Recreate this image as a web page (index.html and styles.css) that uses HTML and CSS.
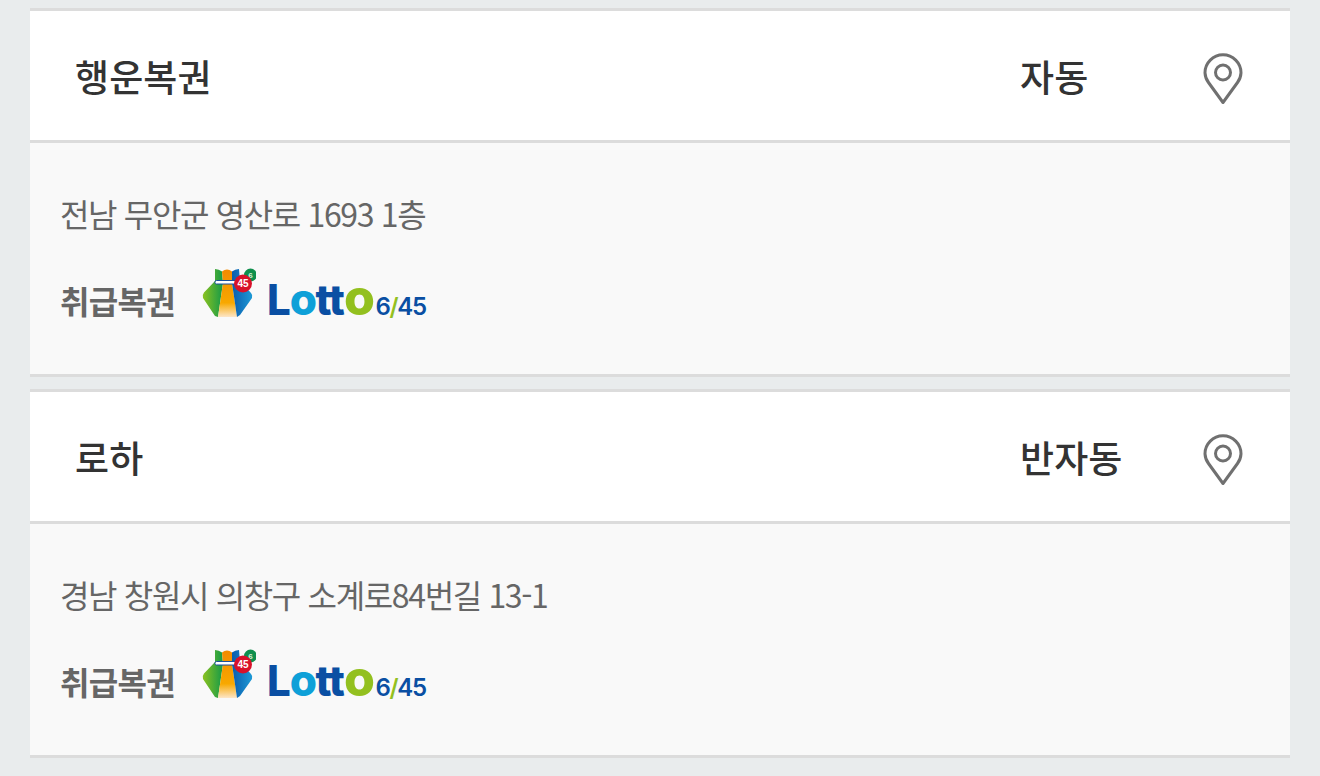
FILE: index.html
```html
<!DOCTYPE html>
<html lang="ko">

<head>
    <meta charset="UTF-8">
    <meta name="viewport" content="width=device-width, initial-scale=1.0">
    <title>판매점</title>
    <link rel="stylesheet" href="styles.css">
</head>

<body>

    <svg class="defs" width="0" height="0">
        <defs>
            <linearGradient id="fade-green" x1="0" y1="0" x2="1" y2="0">
                <stop offset="0" stop-color="#8cc220"/>
                <stop offset="1" stop-color="#159a48"/>
            </linearGradient>
            <linearGradient id="fade-orange" x1="0" y1="0" x2="0" y2="1">
                <stop offset="0" stop-color="#f28a00"/>
                <stop offset="0.7" stop-color="#f8a800"/>
                <stop offset="1" stop-color="#fde6c8"/>
            </linearGradient>
            <linearGradient id="fade-blue" x1="0" y1="0" x2="1" y2="0">
                <stop offset="0" stop-color="#0a5cad"/>
                <stop offset="1" stop-color="#1e9ad6"/>
            </linearGradient>
            <symbol id="bag" viewBox="0 0 54 50">
                <path d="M13 1 Q17 1 20 3.500 L21 15 L16 49 L13 48 L1 30 Q0 27 2 24.500 L13 13 Z" fill="url(#fade-green)"/>
                <path d="M20 3.500 Q25 -0.500 30 3.500 L30 15 L35 49 L16 49 L21 15 Z" fill="url(#fade-orange)"/>
                <path d="M30 3.500 Q33 1 37 1 L38 13 L49 25 Q51 27 50 30 L38 47 L35 49 L30 15 Z" fill="url(#fade-blue)"/>
                <rect x="13" y="12.500" width="23" height="3.500" rx="1.500" fill="#fff" stroke="#1b4f9c" stroke-width="1"/>
                <circle cx="48.500" cy="7" r="6.500" fill="#0f8f4d"/>
                <text x="48.500" y="10" class="bag-small">6</text>
                <circle cx="41" cy="15.500" r="9" fill="#d8112a"/>
                <text x="41" y="19" class="bag-num">45</text>
            </symbol>
            <symbol id="pin" viewBox="0 0 40 52">
                <path d="M20 49.500 L5.500 29.500 A17.800 17.800 0 0 1 2 19.800 A18 18 0 0 1 38 19.800 A17.800 17.800 0 0 1 34.500 29.500 Z" fill="none" stroke="currentColor" stroke-width="3" stroke-linejoin="round"/>
                <circle cx="20" cy="19.500" r="7.500" fill="none" stroke="currentColor" stroke-width="3"/>
            </symbol>
        </defs>
    </svg>

    <div class="container">
        <div class="card">
            <div class="card-head">
                <span class="shop-name">행운복권</span>
                <span class="shop-type">자동</span>
                <svg class="pin"><use href="#pin"/></svg>
            </div>
            <div class="card-body">
                <p class="address">전남 무안군 영산로 1693 1층</p>
                <div class="goods">
                    <b>취급복권</b>
                    <svg class="bag"><use href="#bag"/></svg>
                    <span class="lotto"><i class="c1">L</i><i class="c2 o1">o</i><i class="c1">tt</i><i class="c3 o2">o</i><small>6<em>/</em>45</small></span>
                </div>
            </div>
        </div>

        <div class="card">
            <div class="card-head">
                <span class="shop-name">로하</span>
                <span class="shop-type">반자동</span>
                <svg class="pin"><use href="#pin"/></svg>
            </div>
            <div class="card-body">
                <p class="address">경남 창원시 의창구 소계로84번길 13-1</p>
                <div class="goods">
                    <b>취급복권</b>
                    <svg class="bag"><use href="#bag"/></svg>
                    <span class="lotto"><i class="c1">L</i><i class="c2 o1">o</i><i class="c1">tt</i><i class="c3 o2">o</i><small>6<em>/</em>45</small></span>
                </div>
            </div>
        </div>
    </div>

</body>

</html>
```

FILE: styles.css
```css
body {
    margin: 0;
    background: #e9eced;
    font-family: "Noto Sans CJK KR", "Noto Sans", sans-serif;
    overflow: hidden;
}

.defs {
    position: absolute;
}

.container {
    padding: 8px 30px 0;
}

.card {
    margin-bottom: 12px;
    border-top: 3px solid #dcdcdc;
    border-bottom: 3px solid #dcdcdc;
    background: #f9f9f9;
}

.card-head {
    display: flex;
    align-items: center;
    height: 129px;
    padding: 0 47px 0 45px;
    border-bottom: 3px solid #dcdcdc;
    background: #fff;
}

.shop-name {
    flex: 1;
    font-size: 37px;
    font-weight: 500;
    letter-spacing: 0.1px;
    color: #333;
}

.shop-type {
    width: 183px;
    font-size: 37px;
    font-weight: 500;
    letter-spacing: 0.1px;
    color: #333;
}

.pin {
    width: 40px;
    height: 52px;
    margin-top: 6px;
    color: #707070;
}

.card-body {
    height: 231px;
    padding: 0 30px;
}

.address {
    margin: 0;
    padding-top: 46px;
    font-size: 32px;
    line-height: 48px;
    letter-spacing: -1.35px;
    color: #666;
}

.goods {
    display: flex;
    align-items: flex-start;
    margin-top: 31px;
    height: 50px;
}

.goods b {
    margin-top: 7px;
    font-size: 32px;
    font-weight: 700;
    line-height: 50px;
    letter-spacing: -0.7px;
    color: #666;
}

.bag {
    width: 54px;
    height: 50px;
    margin-left: 27px;
}

.bag-num {
    font-family: "Liberation Sans", sans-serif;
    font-size: 10px;
    font-weight: 700;
    fill: #fff;
    text-anchor: middle;
}

.bag-small {
    font-family: "Liberation Sans", sans-serif;
    font-size: 8px;
    font-weight: 700;
    fill: #d6efd8;
    text-anchor: middle;
}

.lotto {
    margin-left: 11px;
    margin-top: 4px;
    font-family: Inter, "Liberation Sans", sans-serif;
    font-size: 42px;
    font-weight: 800;
    line-height: 50px;
    letter-spacing: -1px;
    white-space: nowrap;
}

.lotto i {
    font-style: normal;
}

.o1 {
    font-size: 44px;
    letter-spacing: -1.500px;
}

.o2 {
    font-size: 50px;
    letter-spacing: -0.500px;
}

.c1 {
    color: #0a4fa3;
}

.c2 {
    color: #0ea0d8;
}

.c3 {
    color: #93c01f;
}

.lotto small {
    margin-left: 1px;
    font-size: 24px;
    font-weight: 600;
    letter-spacing: -1.300px;
    color: #0a4fa3;
}

.lotto em {
    font-style: normal;
    color: #93c01f;
}
```
